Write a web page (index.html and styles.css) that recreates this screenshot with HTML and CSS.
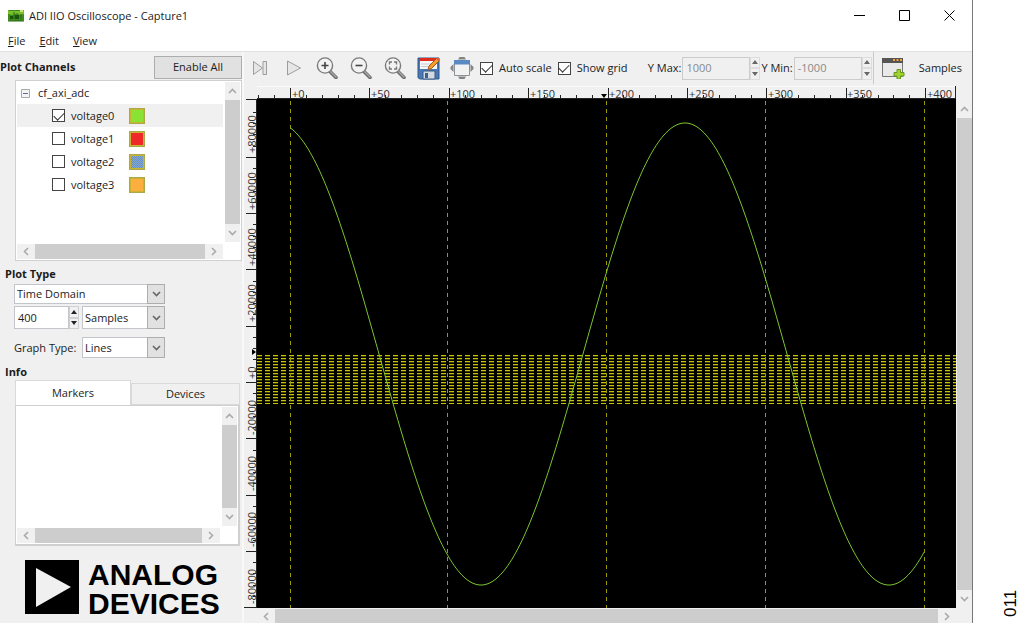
FILE: index.html
```html
<!DOCTYPE html>
<html lang="en">
<head>
<meta charset="utf-8">
<title>ADI IIO Oscilloscope - Capture1</title>
<link rel="stylesheet" href="styles.css">
</head>
<body>
<svg width="0" height="0" class="defs" aria-hidden="true">
  <symbol id="chev-up" viewBox="0 0 9 6"><path d="M1 5 4.500 1.500 8 5" fill="none" stroke="currentColor" stroke-width="1.600"/></symbol>
  <symbol id="chev-down" viewBox="0 0 9 6"><path d="M1 1 4.500 4.500 8 1" fill="none" stroke="currentColor" stroke-width="1.600"/></symbol>
  <symbol id="chev-left" viewBox="0 0 6 9"><path d="M5 1 1.500 4.500 5 8" fill="none" stroke="currentColor" stroke-width="1.600"/></symbol>
  <symbol id="chev-right" viewBox="0 0 6 9"><path d="M1 1 4.500 4.500 1 8" fill="none" stroke="currentColor" stroke-width="1.600"/></symbol>
  <symbol id="tri-up" viewBox="0 0 6 4"><path d="M0 4 3 0 6 4z" fill="currentColor"/></symbol>
  <symbol id="tri-down" viewBox="0 0 6 4"><path d="M0 0 3 4 6 0z" fill="currentColor"/></symbol>
  <symbol id="lens" viewBox="0 0 22 22">
    <path d="M14 14.500 20 20.500" stroke="#6f6f6f" stroke-width="3.600" stroke-linecap="round"/>
    <path d="M14.500 14.500 20 20" stroke="#a9a9a9" stroke-width="1.200" stroke-linecap="round"/>
    <circle cx="9" cy="8.500" r="7.600" fill="#f3f3f3" stroke="#7b7b7b" stroke-width="1.400"/>
  </symbol>
</svg>

<div class="page">
  <main class="window">
    <header class="titlebar">
      <svg class="app-icon" viewBox="0 0 17 13" aria-hidden="true">
        <rect x="0" y="1" width="16" height="11" rx="1" fill="#3f8c1c"/>
        <path d="M0 2h16v3l-4 1-3-2-4 2-5-1z" fill="#79bf2e"/>
        <path d="M2 7h3v3H2zM7 6h4v4H7z" fill="#1d5310"/>
        <path d="M13 5v5M6 3v7M0 12h16" stroke="#2a6814"/>
        <path d="M12 1h3v2h-3z" fill="#c4e86e"/>
      </svg>
      <h1 class="title">ADI IIO Oscilloscope - Capture1</h1>
      <div class="window-buttons">
        <button aria-label="Minimize"><svg viewBox="0 0 11 11"><path d="M0 5.500h11" stroke="#000"/></svg></button>
        <button aria-label="Maximize"><svg viewBox="0 0 11 11"><path d="M.5.500h10v10H.5z" fill="none" stroke="#000"/></svg></button>
        <button aria-label="Close"><svg viewBox="0 0 11 11"><path d="M.5.500l10 10M10.500.500l-10 10" stroke="#000"/></svg></button>
      </div>
    </header>
    <nav class="menubar">
      <button><u>F</u>ile</button>
      <button><u>E</u>dit</button>
      <button><u>V</u>iew</button>
    </nav>

    <div class="content">
      <aside class="sidebar">
        <div class="channels-head">
          <h2>Plot Channels</h2>
          <button class="enable-all">Enable All</button>
        </div>

        <section class="tree" aria-label="Plot Channels">
          <div class="tree-main">
            <div class="tree-row device">
              <svg class="expander" viewBox="0 0 9 9"><path d="M.5.500h8v8h-8z" fill="#f4f4f4" stroke="#a9a9a9"/><path d="M2 4.500h5" stroke="#5a6c9c"/></svg>
              <span>cf_axi_adc</span>
            </div>
            <div class="tree-row selected"><label><input type="checkbox" class="check" checked>voltage0</label><i class="swatch green"></i></div>
            <div class="tree-row"><label><input type="checkbox" class="check">voltage1</label><i class="swatch red"></i></div>
            <div class="tree-row"><label><input type="checkbox" class="check">voltage2</label><i class="swatch blue"></i></div>
            <div class="tree-row"><label><input type="checkbox" class="check">voltage3</label><i class="swatch orange"></i></div>
          </div>
          <div class="vscroll"><svg class="cv"><use href="#chev-up"/></svg><div class="thumb"></div><svg class="cv"><use href="#chev-down"/></svg></div>
          <div class="hscroll"><svg class="ch"><use href="#chev-left"/></svg><div class="thumb"></div><svg class="ch"><use href="#chev-right"/></svg></div>
        </section>

        <h2 class="section-title">Plot Type</h2>
        <div class="plot-type">
          <div class="combo wide">
            <select aria-label="Plot type"><option>Time Domain</option></select>
            <span class="combo-arrow"><svg class="cv"><use href="#chev-down"/></svg></span>
          </div>
          <div class="spin samples">
            <input type="text" value="400" aria-label="Sample count">
            <div class="spin-buttons"><button aria-label="Increase"><svg><use href="#tri-up"/></svg></button><button aria-label="Decrease"><svg><use href="#tri-down"/></svg></button></div>
          </div>
          <div class="combo">
            <select aria-label="Unit"><option>Samples</option></select>
            <span class="combo-arrow"><svg class="cv"><use href="#chev-down"/></svg></span>
          </div>
        </div>
        <div class="graph-type">
          <label for="graph-type">Graph Type:</label>
          <div class="combo">
            <select id="graph-type"><option>Lines</option></select>
            <span class="combo-arrow"><svg class="cv"><use href="#chev-down"/></svg></span>
          </div>
        </div>

        <h2 class="section-title info">Info</h2>
        <div class="tabs">
          <button class="active">Markers</button>
          <button>Devices</button>
        </div>
        <section class="tree markers" aria-label="Markers">
          <div class="tree-main"></div>
          <div class="vscroll"><svg class="cv"><use href="#chev-up"/></svg><div class="thumb"></div><svg class="cv"><use href="#chev-down"/></svg></div>
          <div class="hscroll"><svg class="ch"><use href="#chev-left"/></svg><div class="thumb"></div><svg class="ch"><use href="#chev-right"/></svg></div>
        </section>

        <div class="logo">
          <svg viewBox="0 0 54 54" aria-hidden="true"><path d="M0 0h54v54H0z"/><path d="M11 8 46 27 11 47z" fill="#f0f0f0"/></svg>
          <p>ANALOG<br>DEVICES</p>
        </div>
      </aside>

      <section class="scope">
        <div class="toolbar">
          <div class="tools">
            <button aria-label="Single capture"><svg width="16" height="16" viewBox="0 0 16 16"><path d="M1.500 1.500 10.500 8l-9 6.500zM11 1.500h3.500v13H11z" fill="#e6e6e6" stroke="#9d9d9d"/></svg></button>
            <button aria-label="Capture"><svg width="16" height="16" viewBox="0 0 16 16"><path d="M1.500 1 14.500 8l-13 7z" fill="#e6e6e6" stroke="#9d9d9d"/></svg></button>
            <button aria-label="Zoom in"><svg width="22" height="22" viewBox="0 0 22 22"><use href="#lens"/><path d="M9 5v7M5.500 8.500h7" stroke="#444" stroke-width="1.600"/></svg></button>
            <button aria-label="Zoom out"><svg width="22" height="22" viewBox="0 0 22 22"><use href="#lens"/><path d="M5.500 8.500h7" stroke="#444" stroke-width="1.600"/></svg></button>
            <button aria-label="Zoom fit"><svg width="22" height="22" viewBox="0 0 22 22"><use href="#lens"/><path d="M5.500 7.500V5h2.500M10 5h2.500v2.500M12.500 9.500V12H10M8 12H5.500V9.500" fill="none" stroke="#777" stroke-width="1.400"/></svg></button>
            <button aria-label="Save as"><svg width="23" height="23" viewBox="0 0 23 23">
              <path d="M1 1h21v21H2.500L1 20.500z" fill="#4a78b4" stroke="#2d568c"/>
              <path d="M3 2h17v10H3z" fill="#f7f7f7"/><path d="M2 1h19v3H2z" fill="#e12b1d"/>
              <path d="M4 7h11M4 9.500h8" stroke="#c8ccd2"/>
              <path d="M6 14h12v8H6z" fill="#d5d8dc" stroke="#345a8a"/><path d="M8 16h3v5H8z" fill="#385f92"/>
              <path d="M11 12.500 12 9 19.500 1.500 22 4 14.500 11.500z" fill="#f49b2c" stroke="#a35c17"/><path d="M19.500 1.500 21 .500 23 2.500 22 4z" fill="#e85a4b"/></svg></button>
            <button aria-label="Full screen"><svg width="24" height="24" viewBox="0 0 24 24">
              <path d="M8 3.500 9.500 1h5L16 3.500zM8 20.500 9.500 23h5l1.500-2.500zM3.500 8 .500 11v2l3 3zM20.500 8l3 3v2l-3 3z" fill="#858585"/>
              <path d="M4.500 4.500h15v15h-15z" fill="#f2f2f2" stroke="#8b9298"/><path d="M4 4h16v4.500H4z" fill="#5b8ac2"/></svg></button>
          </div>
          <label><input type="checkbox" class="check" checked>Auto scale</label>
          <label><input type="checkbox" class="check" checked>Show grid</label>
          <label class="range first">Y Max:
            <span class="spin"><input type="text" value="1000" disabled>
            <span class="spin-buttons"><button disabled aria-label="Increase Y max"><svg><use href="#tri-up"/></svg></button><button disabled aria-label="Decrease Y max"><svg><use href="#tri-down"/></svg></button></span></span>
          </label>
          <label class="range">Y Min:
            <span class="spin"><input type="text" value="-1000" disabled>
            <span class="spin-buttons"><button disabled aria-label="Increase Y min"><svg><use href="#tri-up"/></svg></button><button disabled aria-label="Decrease Y min"><svg><use href="#tri-down"/></svg></button></span></span>
          </label>
          <span class="divider"></span>
          <button class="new-plot" aria-label="New plot"><svg width="24" height="22" viewBox="0 0 24 22">
            <path d="M1.500 1.500h20v18h-20z" fill="#e9e9e9" stroke="#777"/><path d="M1 1h21v5H1z" fill="#555"/>
            <path d="M12 3h2M15.500 3h2M19 3h2" stroke="#f0a13a" stroke-width="2"/>
            <path d="M16 12.500h3.500v3H23V19h-3.500v3H16v-3h-3v-3.500h3z" fill="#a2d32c" stroke="#63951a"/></svg></button>
          <span class="unit">Samples</span>
        </div>

        <div class="plot-area">
          <svg class="chart" viewBox="0 0 712 523" role="img" aria-label="Sine wave on channel voltage0"></svg>
          <div class="vscroll"><svg class="cv"><use href="#chev-up"/></svg><div class="thumb"></div><svg class="cv"><use href="#chev-down"/></svg></div>
          <div class="hscroll"><svg class="ch"><use href="#chev-left"/></svg><div class="thumb"></div><svg class="ch"><use href="#chev-right"/></svg></div>
        </div>
      </section>
    </div>
  </main>
  <div class="figure-id">011</div>
</div>
<script src="plot.js"></script>
</body>
</html>
```
FILE: styles.css
```css
* { box-sizing: border-box; }

body {
  margin: 0;
  background: #fff;
  color: #1c1c1c;
  font: 11px/16px "Open Sans", "Noto Sans", sans-serif;
}

button, input, select { font: inherit; color: inherit; margin: 0; }
button { padding: 0; border: 0; background: none; }
h1, h2, p { margin: 0; font-size: inherit; }
label { display: flex; align-items: center; }
svg { display: block; flex: none; }
.defs { position: absolute; }

.page { display: flex; min-height: 100vh; padding-bottom: 1px; }
.window {
  flex: 1;
  min-width: 0;
  display: flex;
  flex-direction: column;
  border-right: 1px solid #777;
}
.figure-id {
  flex: none;
  width: 51px;
  padding: 6px 26px 0 0;
  writing-mode: vertical-rl;
  transform: rotate(180deg);
  font: 17px/24px "Liberation Sans", Arial, sans-serif;
  color: #000;
}

.titlebar { display: flex; align-items: center; height: 31px; padding-left: 8px; }
.app-icon { width: 17px; height: 13px; }
.title { flex: 1; margin-left: 4px; font-weight: 400; }
.window-buttons { display: flex; }
.window-buttons button { width: 45px; height: 30px; display: grid; place-items: center; }
.window-buttons svg { width: 11px; height: 11px; }

.menubar { display: flex; gap: 14px; height: 20px; padding-left: 8px; align-items: center; }

.content { flex: 1; display: flex; background: #f0f0f0; border-top: 1px solid #e0e0e0; }

.sidebar { width: 244px; flex: none; border-right: 2px solid #f8f8f8; }
.sidebar h2 { font-weight: 700; line-height: 16px; }
.channels-head { display: flex; justify-content: space-between; align-items: center; height: 28px; padding-top: 2px; }
.enable-all { width: 88px; height: 23px; background: #e1e1e1; border: 1px solid #adadad; }

.tree {
  display: grid;
  grid-template: 1fr 16px / 1fr 15px;
  gap: 2px;
  height: 181px;
  margin-left: 15px;
  padding: 1px 1px 0 1px;
  background: #fff;
  border: 1px solid #d0d0d0;
}
.tree-row { display: flex; align-items: center; height: 23px; padding-left: 35px; }
.tree-row.device { height: 22px; padding-left: 4px; gap: 8px; }
.tree-row.selected { background: #f0f0f0; }
.tree-row label { width: 77px; gap: 6px; }
.expander { width: 9px; height: 9px; }
.swatch { width: 16px; height: 16px; border: 1px solid #a9a94a; box-shadow: inset 0 0 0 1px #c8b430; }
.green { background: #8ae234; }
.red { background: #ef2929; }
.blue { background: repeating-conic-gradient(#6390cc 0 25%, #8aa9c4 0 50%) 0 0 / 2px 2px; }
.orange { background: #fcaf3e; }

.check {
  appearance: none;
  flex: none;
  width: 13px;
  height: 13px;
  background: #fff;
  border: 1px solid #444;
  display: grid;
  place-items: center;
}
.check:checked::before {
  content: "";
  width: 9px;
  height: 5px;
  border: solid #333;
  border-width: 0 0 1px 1px;
  transform: translateY(-1px) rotate(-45deg);
}

.vscroll, .hscroll { display: flex; align-items: center; background: #f0f0f0; color: #aaa; }
.vscroll { flex-direction: column; width: 15px; padding: 6px 0; gap: 6px; }
.hscroll { height: 15px; padding: 0 6px; gap: 6px; }
.thumb { flex: 1; align-self: stretch; background: #cdcdcd; }
.cv { width: 9px; height: 6px; }
.ch { width: 6px; height: 9px; }

.section-title { padding-left: 5px; margin-top: 5px; }
.section-title.info { margin-top: 6px; }
.plot-type {
  display: grid;
  grid-template-columns: 65px 83px;
  grid-template-rows: 20px 23px;
  gap: 2px 3px;
  width: 151px;
  margin: 2px 0 0 14px;
}
.combo { display: grid; grid-template-columns: 1fr 18px; min-height: 20px; }
.combo.wide { grid-column: 1 / 3; }
.combo select {
  grid-area: 1 / 1 / 2 / 3;
  appearance: none;
  width: 100%;
  padding: 0 20px 0 2px;
  background: #fff;
  border: 1px solid #c2c5c9;
  border-radius: 0;
}
.combo-arrow {
  grid-area: 1 / 2;
  z-index: 1;
  display: grid;
  place-items: center;
  background: #e1e1e1;
  border: 1px solid #adadad;
  color: #666;
  pointer-events: none;
}
.spin { display: flex; height: 23px; }
.spin input { min-width: 0; width: 100%; border: 1px solid #c2c5c9; padding: 0 3px; background: #fff; }
.spin-buttons { flex: none; display: grid; grid-template-rows: 1fr 1fr; width: 10px; }
.spin-buttons button { display: grid; place-items: center; background: #f0f0f0; border: 1px solid #cfcfcf; color: #222; }
.spin-buttons svg { width: 6px; height: 4px; }
.graph-type { display: flex; justify-content: space-between; align-items: center; width: 151px; margin: 8px 0 0 14px; }
.graph-type .combo { width: 83px; height: 21px; }

.tabs { display: flex; align-items: flex-end; margin: 0 2px 0 15px; }
.tabs button { flex: 1; height: 22px; border: 1px solid #d9d9d9; }
.tabs .active { flex: none; width: 116px; height: 25px; background: #fff; border-bottom: 0; }
.tree.markers { height: 141px; margin-right: 2px; border-width: 1px 2px 2px 1px; }

.logo { display: flex; gap: 9px; padding: 14px 0 0 25px; }
.logo svg { width: 54px; height: 54px; }
.logo p { font: 700 30px/29px "Liberation Sans", Arial, sans-serif; color: #000; white-space: nowrap; }

.scope { flex: 1; min-width: 0; }
.toolbar { display: flex; align-items: center; height: 32px; white-space: nowrap; }
.toolbar label { gap: 6px; margin-right: 6px; }
.tools { display: grid; grid-template-columns: repeat(7, 1fr); width: 236px; margin-left: -1px; margin-right: 1px; flex: none; }
.tools button { display: grid; place-items: center; height: 32px; }
.toolbar .range { gap: 1px; margin-right: 1px; }
.toolbar .range.first { margin-left: auto; }
.range .spin { width: 78px; }
.range input { background: #f0f0f0; color: #8a8a8a; border-color: #ccc; }
.range .spin-buttons button { color: #666; border-color: #ddd; }
.divider { width: 1px; height: 32px; background: #c9c9c9; }
.new-plot { margin: 0 14px 0 7px; }
.unit { margin-right: 10px; }

.plot-area { display: grid; grid-template-columns: 1fr 15px; column-gap: 1px; background: #f0f0f0; padding-top: 1px; }
.chart { width: 100%; height: auto; }
.plot-area .vscroll { margin-top: 15px; }
.plot-area .hscroll { height: 14px; margin: 1px 0 0 13px; }
.ruler-text { font: 11px "Open Sans", "Noto Sans", sans-serif; fill: #333; }
```
FILE: plot.js
```js
const NS = "http://www.w3.org/2000/svg";
const chart = document.querySelector(".chart");

function add(name, attrs, text) {
  const el = document.createElementNS(NS, name);
  for (const key in attrs) el.setAttribute(key, attrs[key]);
  if (text) el.textContent = text;
  chart.appendChild(el);
}
function line(x1, y1, x2, y2, stroke, dash) {
  add("line", { x1, y1, x2, y2, stroke, "stroke-dasharray": dash || "none" });
}

function drawPlot() {
  const left = 13, top = 14, right = 712, bottom = 523;
  const x0 = 46.5, xStep = 79.4;
  const y0 = 297.5, yStep = 56.3;

  add("rect", { x: left, y: top, width: right - left, height: bottom - top, fill: "#000" });

  // Horizontal ruler
  line(left, 1.5, right, 1.5, "#fafafa");
  line(left, 13.5, right, 13.5, "#222");
  for (let i = -10; i <= 41; i++) {
    const x = Math.floor(x0 + i * xStep / 5) + 0.5;
    if (x > left) line(x, i % 5 ? 10 : 3, x, 13, "#222");
  }
  line(711.5, 1, 711.5, 14, "#222");
  for (let i = 0; i <= 8; i++) {
    add("text", { x: Math.round(x0 + i * xStep) + 1, y: 13, class: "ruler-text" }, "+" + i * 50);
  }
  add("path", { d: "M357 9h6l-3 4z", fill: "#000" });

  // Vertical ruler
  line(12.5, top, 12.5, bottom, "#222");
  line(2, 14.5, 13, 14.5, "#222");
  for (let i = -19; i <= 24; i++) {
    const y = Math.floor(y0 - i * yStep / 5) + 0.5;
    if (y > 14) line(i % 5 ? 9 : 2, y, 13, y, "#222");
  }
  line(0, 522.5, 13, 522.5, "#222");
  for (let i = -4; i <= 4; i++) {
    const y = Math.round(y0 - i * yStep) - 4;
    const label = (i < 0 ? "" : "+") + i * 20000;
    add("text", { transform: `translate(12 ${y}) rotate(-90)`, class: "ruler-text" }, label);
  }
  add("path", { d: "M8 264v6l4-3z", fill: "#000" });

  // Grid
  for (let y = 270; y <= 318; y += 3) {
    line(left, y + 0.5, right, y + 0.5, "#c4c400", "5 3");
    if (y < 318) line(left, y + 1.5, right, y + 1.5, "#3c3c00", "5 3");
  }
  for (let i = 0; i <= 4; i++) {
    const x = Math.floor(x0 + i * xStep * 2 - 0.5) + 0.5 - (i ? 1 : 0);
    line(x, top + 2, x, bottom, "#9a9a00", "4 4");
  }

  // Waveform
  let points = "";
  for (let x = 46; x <= 681; x += 2) {
    const y = 269 - 231 * Math.cos((x - 33) * 2 * Math.PI / 408);
    points += x + "," + y.toFixed(1) + " ";
  }
  add("polyline", { points, fill: "none", stroke: "#7cc62e", "stroke-width": 1 });
}

drawPlot();
```
